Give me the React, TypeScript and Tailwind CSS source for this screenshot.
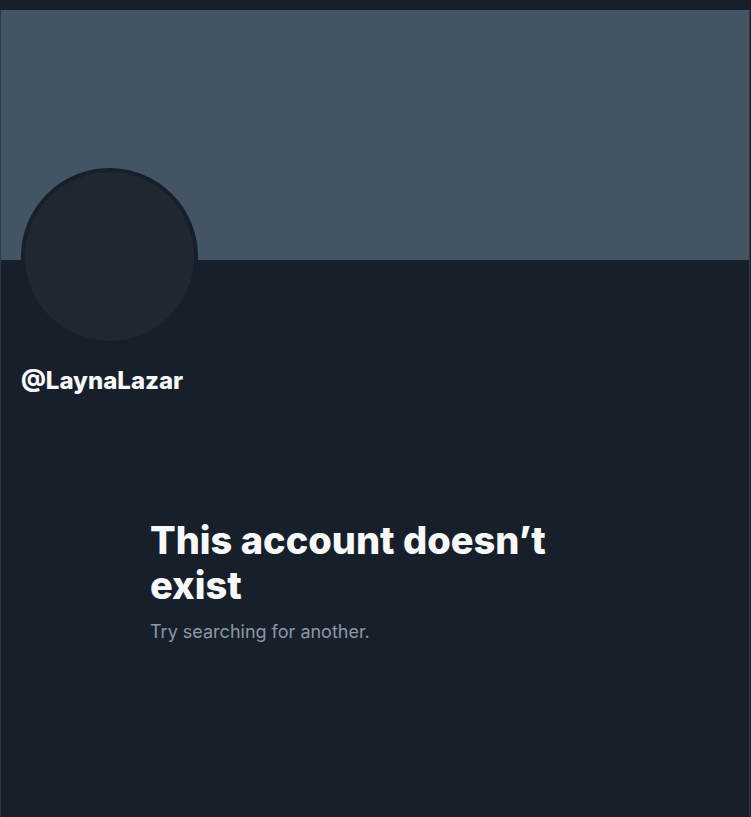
import React from 'react';

const App: React.FC = () => {
  return (
    <div className="min-h-[817px] w-[751px] bg-[#17202a] font-['Inter','Noto_Sans',sans-serif]">
      <div className="h-[10px] bg-[#161f2a]" />
      <div className="w-[750px] min-h-[807px] border-x border-[#2f3a46] bg-[#17202a]">
        {/* Banner */}
        <div className="h-[250px] bg-[#435464]" />

        {/* Avatar + handle */}
        <div className="px-5">
          <div className="-mt-[92px] h-[177px] w-[177px] rounded-full border-4 border-[#17202a] bg-[#202731]" />
          <div className="mt-[21px] text-[24px] font-extrabold leading-[30px] text-[#f7f9f9]">@LaynaLazar</div>
        </div>

        {/* Empty state */}
        <div className="mx-auto mt-[122px] w-[450px]">
          <h1 className="text-[38px] font-extrabold leading-[45px] text-[#f7f9f9]">
            This account doesn’t exist
          </h1>
          <p className="mt-[12px] text-[18px] leading-6 text-[#8b98a5]">Try searching for another.</p>
        </div>
      </div>
    </div>
  );
};

export default App;
